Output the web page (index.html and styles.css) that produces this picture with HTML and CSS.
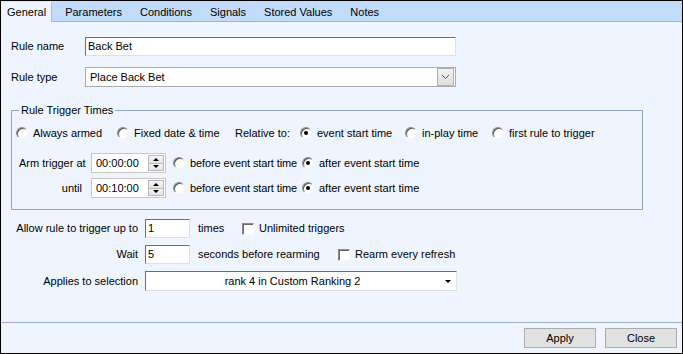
FILE: index.html
```html
<!DOCTYPE html>
<html>
<head>
<meta charset="utf-8">
<title>Rule editor</title>
<link rel="stylesheet" href="styles.css">
</head>
<body>
<div class="window">
  <div class="tabs">
    <div class="tab active">General</div>
    <div class="tab">Parameters</div>
    <div class="tab">Conditions</div>
    <div class="tab">Signals</div>
    <div class="tab">Stored Values</div>
    <div class="tab">Notes</div>
  </div>
  <div class="panel">
    <div class="row">
      <span class="lbl">Rule name</span>
      <div class="textbox">Back Bet</div>
    </div>
    <div class="row r-type">
      <span class="lbl">Rule type</span>
      <div class="combo">
        <span>Place Back Bet</span>
        <span class="drop"><svg width="9" height="6" viewBox="0 0 9 6"><polyline points="1,1 4.5,4.5 8,1" fill="none" stroke="#555" stroke-width="1"/></svg></span>
      </div>
    </div>
    <fieldset class="group">
      <legend>Rule Trigger Times</legend>
      <div class="grow g1">
        <label class="opt o-always"><i class="radio"></i>Always armed</label>
        <label class="opt o-fixed"><i class="radio"></i>Fixed date &amp; time</label>
        <span class="rel">Relative to:</span>
        <label class="opt o-event"><i class="radio on"></i>event start time</label>
        <label class="opt o-inplay"><i class="radio"></i>in-play time</label>
        <label class="opt"><i class="radio"></i>first rule to trigger</label>
      </div>
      <div class="grow g2">
        <span class="glbl">Arm trigger at</span>
        <div class="spin"><span class="spin-val">00:00:00</span><span class="spin-btns"><b class="sb"><i class="tri-up"></i></b><b class="sb"><i class="tri-down"></i></b></span></div>
        <label class="opt o-before"><i class="radio"></i>before event start time</label>
        <label class="opt"><i class="radio on"></i>after event start time</label>
      </div>
      <div class="grow g3">
        <span class="glbl until">until</span>
        <div class="spin"><span class="spin-val">00:10:00</span><span class="spin-btns"><b class="sb"><i class="tri-up"></i></b><b class="sb"><i class="tri-down"></i></b></span></div>
        <label class="opt o-before"><i class="radio"></i>before event start time</label>
        <label class="opt"><i class="radio on"></i>after event start time</label>
      </div>
    </fieldset>
    <div class="lrow l1">
      <span class="llbl">Allow rule to trigger up to</span>
      <div class="numbox">1</div>
      <span class="suffix s1">times</span>
      <label class="opt"><i class="chk"></i>Unlimited triggers</label>
    </div>
    <div class="lrow l2">
      <span class="llbl">Wait</span>
      <div class="numbox">5</div>
      <span class="suffix s2">seconds before rearming</span>
      <label class="opt"><i class="chk"></i>Rearm every refresh</label>
    </div>
    <div class="lrow l3">
      <span class="llbl">Applies to selection</span>
      <div class="select"><span class="sel-text">rank 4 in Custom Ranking 2</span><span class="sel-arrow"><i class="tri-down"></i></span></div>
    </div>
  </div>
  <div class="footer">
    <button class="btn">Apply</button>
    <button class="btn">Close</button>
  </div>
</div>
</body>
</html>
```
FILE: styles.css
```css
* { box-sizing: border-box; }
body { margin: 0; font: 11px/13px "Liberation Sans", Arial, sans-serif; color: #000; }

.window {
  width: 683px; height: 354px;
  border: 1px solid #000;
  background: #eef5fe;
  display: flex; flex-direction: column;
}

.tabs {
  height: 21px; flex: none;
  background: #c3dbfb;
  border-bottom: 1px solid #9fb5d3;
  display: flex; align-items: flex-end;
}
.tab { height: 20px; line-height: 22px; padding: 0 9px; white-space: nowrap; }
.tab.active {
  background: #eef5fe;
  height: 21px; margin-bottom: -1px;
  padding: 0 5px 0 6px; margin-right: 4px;
  border-right: 1px solid #a9bfdc;
  border-top: 1px solid #dce7f6;
  line-height: 21px;
}

.panel { flex: 1; padding: 15px 0 0 10px; }
.row { display: flex; align-items: center; }
.r-type { margin-top: 11px; }
.lbl { width: 74px; flex: none; }

.textbox {
  width: 371px; height: 19px;
  background: #fff;
  border: 1px solid; border-color: #6e6e6e #e0e0e0 #e0e0e0 #6e6e6e;
  padding: 0 2px; line-height: 17px;
}
.combo {
  width: 371px; height: 20px;
  background: #fff; border: 1px solid #acacac;
  display: flex; align-items: center; justify-content: space-between;
  padding: 0 1px 0 4px;
}
.drop {
  width: 17px; height: 18px;
  border: 1px solid #b0b0b0;
  background: linear-gradient(#f3f3f3, #dedede);
  display: flex; align-items: center; justify-content: center;
}

.group {
  margin: 17px 0 0 0; min-width: 0;
  width: 632px;
  border: 1px solid #8aa8d0;
  padding: 6px 0 11px 4px;
}
.group legend { margin-left: 3px; padding: 0 2px; line-height: 13px; }
.grow { display: flex; align-items: center; height: 20px; white-space: nowrap; }
.g2 { margin-top: 10px; }
.g3 { margin-top: 5px; }

.opt { display: flex; align-items: center; gap: 5px; flex: none; white-space: nowrap; }
.o-always { width: 101px; }
.o-fixed { width: 118px; }
.rel { width: 65px; flex: none; }
.o-event { width: 105px; }
.o-inplay { width: 87px; }
.o-before { margin-left: 7px; width: 129px; letter-spacing: -0.1px; }

.radio {
  width: 12px; height: 12px; flex: none;
  border-radius: 50%;
  border: 1px solid; border-color: #8a8a8a #f6f6f6 #f6f6f6 #8a8a8a;
  background: #fff;
  box-shadow: inset 1px 1px 0 #555;
  position: relative;
}
.radio.on::after {
  content: ""; position: absolute; left: 3px; top: 3px;
  width: 4px; height: 4px; border-radius: 50%; background: #000;
}
.chk {
  width: 12px; height: 12px; flex: none;
  border: 1px solid; border-color: #8a8a8a #f6f6f6 #f6f6f6 #8a8a8a;
  background: #fff;
  box-shadow: inset 1px 1px 0 #6a6a6a;
}

.glbl { width: 72px; flex: none; margin-left: 3px; text-align: right; padding-right: 6px; white-space: nowrap; }
.glbl.until { padding-right: 9px; }

.spin {
  width: 75px; height: 20px; flex: none;
  border: 1px solid #c6c6c6; background: #fff;
  display: flex; justify-content: space-between;
}
.spin-val { padding-left: 4px; line-height: 18px; }
.spin-btns { width: 16px; margin: 1px; display: flex; flex-direction: column; }
.sb {
  flex: 1; border: 1px solid #b8b8b8;
  background: linear-gradient(#f5f5f5, #e3e3e3);
  display: flex; align-items: center; justify-content: center;
}
.sb + .sb { border-top: none; }
.tri-up { width: 0; height: 0; border-left: 3px solid transparent; border-right: 3px solid transparent; border-bottom: 3px solid #000; }
.tri-down { width: 0; height: 0; border-left: 3px solid transparent; border-right: 3px solid transparent; border-top: 3px solid #000; }

.lrow { display: flex; align-items: center; }
.l1 { margin-top: 9px; }
.l2 { margin-top: 7px; }
.l3 { margin-top: 7px; }
.llbl { width: 127px; flex: none; text-align: right; margin-right: 7px; white-space: nowrap; }
.numbox {
  width: 45px; height: 19px; flex: none;
  background: #fff;
  border: 1px solid; border-color: #6e6e6e #e0e0e0 #e0e0e0 #6e6e6e;
  padding-left: 2px; line-height: 17px;
}
.suffix { margin-left: 8px; flex: none; white-space: nowrap; }
.s1 { width: 44px; }
.s2 { width: 140px; }

.select {
  width: 312px; height: 20px;
  background: #fff;
  border: 1px solid; border-color: #6e6e6e #e0e0e0 #e0e0e0 #6e6e6e;
  display: flex; align-items: center;
}
.sel-text { flex: 1; text-align: center; }
.sel-arrow { width: 17px; display: flex; justify-content: center; }

.footer {
  height: 31px; flex: none;
  border-top: 1px solid #a0b0c6;
  display: flex; justify-content: flex-end; align-items: flex-start;
  gap: 9px; padding: 5px 5px 0 0;
}
.btn {
  width: 72px; height: 20px; padding: 0;
  font: inherit; color: #000;
  background: #e1e1e1; border: 1px solid #adadad;
}
```
